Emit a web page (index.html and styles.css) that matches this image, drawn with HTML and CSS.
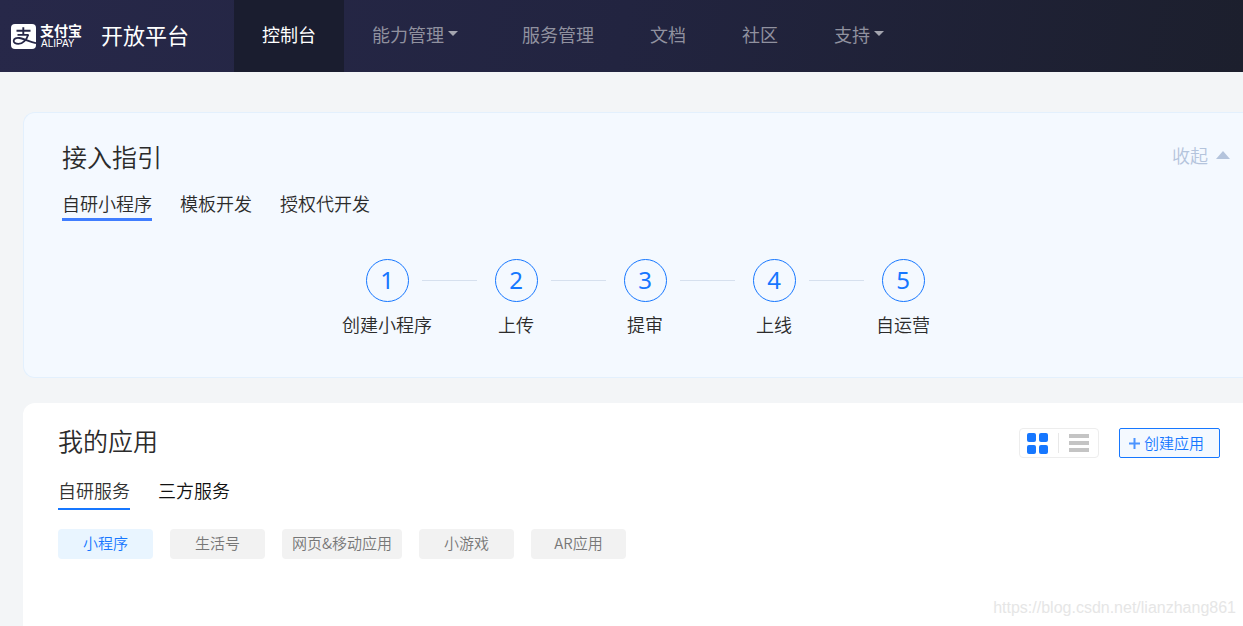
FILE: index.html
```html
<!DOCTYPE html>
<html lang="zh-CN">
<head>
<meta charset="utf-8">
<meta name="viewport" content="width=device-width, initial-scale=1">
<title>开放平台</title>
<link rel="stylesheet" href="styles.css">
</head>
<body>
<header class="topbar">
  <a class="brand" href="#">
    <svg class="brand-mark" viewBox="0 0 25 25" aria-hidden="true">
      <rect width="25" height="25" rx="4" fill="#fff"/>
      <g fill="none" stroke="#262747">
        <path d="M5.5 6.8H19.5M12.3 3.3V10.8M6.5 10.9H17.6" stroke-width="1.9"/>
        <path d="M17.2 10.7C15.8 15.4 11.8 19.9 7.3 19.9C4.4 19.9 2.6 18.5 2.7 16.8C2.8 14.6 5.4 13.5 8.4 14C13 14.8 18.5 17.7 25 19.2" stroke-width="1.8"/>
      </g>
    </svg>
    <span class="brand-word">
      <span class="brand-cn">支付宝</span>
      <span class="brand-en">ALIPAY</span>
    </span>
    <span class="brand-title">开放平台</span>
  </a>
  <nav class="nav">
    <a class="nav-item nav-active" href="#">控制台</a>
    <a class="nav-item" href="#">能力管理<span class="caret"></span></a>
    <a class="nav-item" href="#">服务管理</a>
    <a class="nav-item" href="#">文档</a>
    <a class="nav-item" href="#">社区</a>
    <a class="nav-item" href="#">支持<span class="caret"></span></a>
  </nav>
</header>

<main class="page">
  <section class="card guide">
    <div class="card-head">
      <h2 class="card-title">接入指引</h2>
      <button class="collapse" type="button">收起<span class="collapse-arrow"></span></button>
    </div>
    <nav class="tabs guide-tabs">
      <a class="tab tab-active" href="#">自研小程序</a>
      <a class="tab" href="#">模板开发</a>
      <a class="tab" href="#">授权代开发</a>
    </nav>
    <ol class="steps">
      <li class="step"><span class="step-row"><span class="step-num">1</span><span class="step-line"></span></span><span class="step-label">创建小程序</span></li>
      <li class="step"><span class="step-row"><span class="step-num">2</span><span class="step-line"></span></span><span class="step-label">上传</span></li>
      <li class="step"><span class="step-row"><span class="step-num">3</span><span class="step-line"></span></span><span class="step-label">提审</span></li>
      <li class="step"><span class="step-row"><span class="step-num">4</span><span class="step-line"></span></span><span class="step-label">上线</span></li>
      <li class="step"><span class="step-row"><span class="step-num">5</span></span><span class="step-label">自运营</span></li>
    </ol>
  </section>

  <section class="card apps">
    <div class="card-head apps-head">
      <h2 class="card-title">我的应用</h2>
      <div class="tools">
        <div class="view-switch">
          <button class="view" type="button" aria-label="卡片视图">
            <svg width="21" height="21" viewBox="0 0 21 21" fill="#1677ff" aria-hidden="true"><rect width="9" height="9" rx="2"/><rect x="12" width="9" height="9" rx="2"/><rect y="12" width="9" height="9" rx="2"/><rect x="12" y="12" width="9" height="9" rx="2"/></svg>
          </button>
          <span class="view-divider"></span>
          <button class="view" type="button" aria-label="列表视图">
            <svg width="20" height="18" viewBox="0 0 20 18" fill="#c4c4c4" aria-hidden="true"><rect width="20" height="4"/><rect y="7" width="20" height="4"/><rect y="14" width="20" height="4"/></svg>
          </button>
        </div>
        <button class="create" type="button">
          <svg width="11" height="11" viewBox="0 0 11 11" fill="none" stroke="#4b94ff" stroke-width="2" aria-hidden="true"><path d="M5.5 0V11M0 5.5H11"/></svg>
          创建应用
        </button>
      </div>
    </div>
    <nav class="tabs apps-tabs">
      <a class="tab tab-active" href="#">自研服务</a>
      <a class="tab" href="#">三方服务</a>
    </nav>
    <div class="chips">
      <button class="chip chip-active" type="button">小程序</button>
      <button class="chip" type="button">生活号</button>
      <button class="chip" type="button">网页&amp;移动应用</button>
      <button class="chip" type="button">小游戏</button>
      <button class="chip" type="button">AR应用</button>
    </div>
    <p class="watermark">https://blog.csdn.net/lianzhang861</p>
  </section>
</main>
</body>
</html>
```
FILE: styles.css
```css
* {
  box-sizing: border-box;
}

body {
  margin: 0;
  min-height: 100vh;
  display: flex;
  flex-direction: column;
  background: #f3f5f7;
  color: #2b2b2b;
  font-family: "Noto Sans CJK SC", sans-serif;
  font-size: 18px;
  font-weight: 350;
  line-height: 26px;
}

a {
  color: inherit;
  text-decoration: none;
}

button {
  margin: 0;
  padding: 0;
  border: 0;
  background: none;
  color: inherit;
  font: inherit;
  cursor: pointer;
}

/* Top bar */
.topbar {
  display: flex;
  height: 72px;
  background: linear-gradient(100deg, #272849 0%, #222440 50%, #1c1f2d 100%);
  color: #fff;
}

.brand {
  display: flex;
  align-items: center;
  width: 234px;
  padding-left: 11px;
}

.brand-mark {
  width: 25px;
  height: 25px;
}

.brand-word {
  display: flex;
  flex-direction: column;
  width: 46px;
  margin-left: 4px;
}

.brand-cn {
  font-size: 14px;
  font-weight: 700;
  line-height: 15px;
}

.brand-en {
  padding-left: 1px;
  font-family: "Liberation Sans", sans-serif;
  font-size: 10px;
  font-weight: 400;
  line-height: 11px;
}

.brand-title {
  margin-left: 15px;
  padding-bottom: 5px;
  font-size: 22px;
  font-weight: 400;
}

.nav {
  display: flex;
}

.nav-item {
  display: flex;
  align-items: center;
  padding: 0 28px 5px;
  color: #90919f;
  font-weight: 400;
}

.nav-active {
  background: #1a1d2f;
  color: #fff;
}

.caret {
  margin: 0 8px 0 4px;
  border: 5px solid transparent;
  border-top-color: #a4a5af;
  border-bottom: 0;
}

/* Cards */
.page {
  display: flex;
  flex: 1;
  flex-direction: column;
  gap: 25px;
  padding: 40px 0 0 23px;
}

.card-head {
  display: flex;
  align-items: center;
  justify-content: space-between;
}

.card-title {
  margin: 0;
  font-size: 25px;
  font-weight: inherit;
  line-height: 36px;
}

.tabs {
  display: flex;
  gap: 28px;
}

.tab {
  padding-bottom: 2px;
  border-bottom: 3px solid transparent;
}

.guide {
  padding: 25px 13px 40px 38px;
  border: 1px solid #e3f0fd;
  border-right: 0;
  border-radius: 12px 0 0 12px;
  background: #f4f9ff;
}

.collapse {
  display: flex;
  align-items: center;
  gap: 8px;
  padding-bottom: 2px;
  color: #b4c4dc;
}

.collapse-arrow {
  border: 7px solid transparent;
  border-top: 0;
  border-bottom: 8px solid #b4c4dc;
}

.guide-tabs {
  margin-top: 16px;
}

.guide-tabs .tab-active {
  border-color: #3f7dff;
}

.steps {
  display: flex;
  justify-content: center;
  margin: 38px 2px 0 0;
  padding: 0;
  list-style: none;
}

.step {
  display: flex;
  flex-direction: column;
  align-items: center;
  gap: 9px;
  width: 129px;
}

.step-row {
  display: flex;
  align-items: center;
  width: 43px;
}

.step-num {
  flex: none;
  width: 43px;
  height: 43px;
  border: 1px solid #1677ff;
  border-radius: 50%;
  color: #1677ff;
  font-family: "Noto Sans", sans-serif;
  font-size: 24px;
  font-weight: 400;
  line-height: 40px;
  text-align: center;
}

.step-line {
  flex: none;
  width: 55px;
  height: 1px;
  margin-left: 13px;
  background: #d6e0ee;
}

.apps {
  flex: 1;
  display: flex;
  flex-direction: column;
  padding: 19px 23px 0 35px;
  border-radius: 12px 0 0 0;
  background: #fff;
}

.apps-head {
  align-items: flex-end;
}

.tools {
  display: flex;
  gap: 20px;
}

.view-switch {
  display: flex;
  align-items: center;
  gap: 10px;
  height: 30px;
  padding: 0 9px 0 7px;
  border: 1px solid #ededed;
  border-radius: 4px;
}

.view {
  display: flex;
}

.view-divider {
  width: 1px;
  height: 20px;
  background: #e8e8e8;
}

.create {
  display: flex;
  align-items: center;
  gap: 4px;
  height: 30px;
  padding: 0 15px 0 9px;
  border: 1px solid #1677ff;
  border-radius: 2px;
  background: #f4f9ff;
  color: #1677ff;
  font-size: 15px;
}

.apps-tabs {
  margin-top: 19px;
}

.apps-tabs .tab {
  padding-bottom: 5px;
  border-bottom-width: 2px;
  color: #111;
}

.apps-tabs .tab-active {
  border-color: #1677ff;
  color: #333;
}

.chips {
  display: flex;
  gap: 17px;
  margin-top: 19px;
}

.chip {
  min-width: 95px;
  height: 30px;
  padding: 0 10px 2px;
  border-radius: 4px;
  background: #f2f2f2;
  color: #777;
  font-size: 15px;
}

.chip-active {
  background: #e9f5ff;
  color: #1677ff;
}

.watermark {
  margin: auto -16px 5px 0;
  color: #e6e6e6;
  font-family: "Liberation Sans", sans-serif;
  font-size: 16px;
  font-weight: 400;
  text-align: right;
}
```
